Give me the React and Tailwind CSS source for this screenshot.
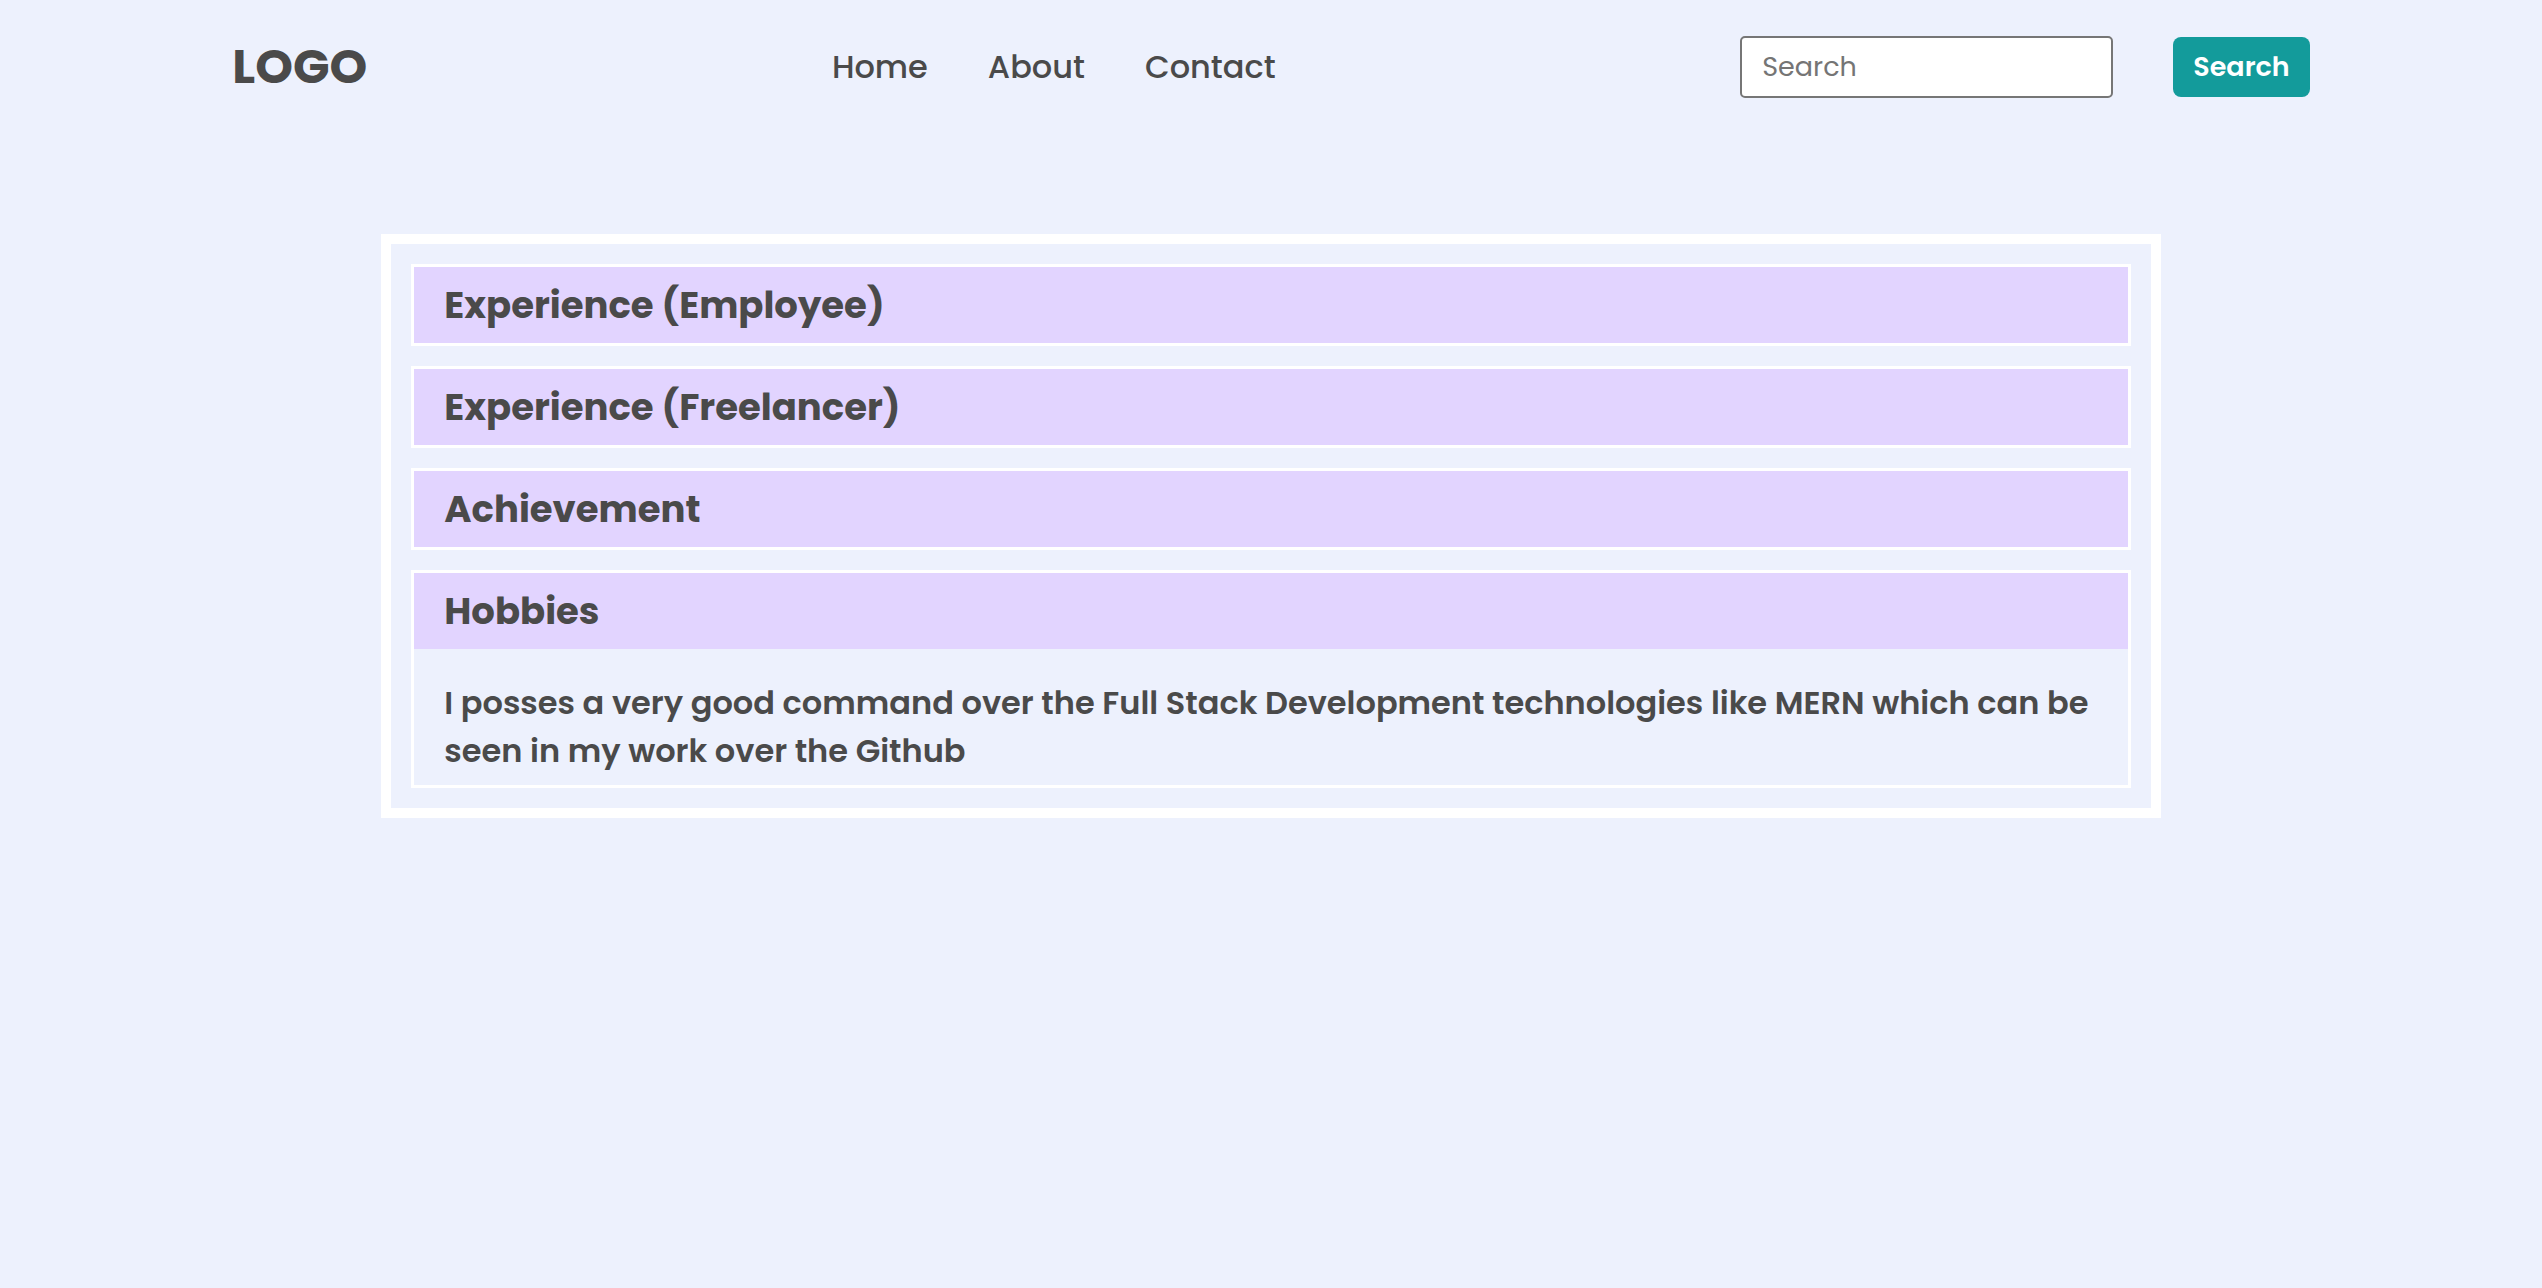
import { useState } from "react";

const links = ["Home", "About", "Contact"];

const sections = [
  {
    title: "Experience (Employee)",
    body: "I have worked as an employee on Full Stack Development projects",
  },
  {
    title: "Experience (Freelancer)",
    body: "I have worked as a freelancer on Full Stack Development projects",
  },
  {
    title: "Achievement",
    body: "My achievements can be seen in my work over the Github",
  },
  {
    title: "Hobbies",
    body: "I posses a very good command over the Full Stack Development technologies like MERN which can be seen in my work over the Github",
  },
];

function Navbar() {
  return (
    <header className="flex items-center justify-around pt-[31px] pb-[30px]">
      <div className="text-[48px] leading-[72px] font-bold">LOGO</div>
      <nav>
        <ul className="flex gap-[60px] text-[32px] leading-[48px] font-medium">
          {links.map((link) => (
            <li key={link}>
              <a href={"#" + link.toLowerCase()}>{link}</a>
            </li>
          ))}
        </ul>
      </nav>
      <form
        className="flex items-center gap-[60px] text-[27px] leading-[40px]"
        onSubmit={(event) => event.preventDefault()}
      >
        <input
          type="search"
          aria-label="Search"
          placeholder="Search"
          className="w-[373px] rounded-[5px] border-2 border-[#767676] bg-white px-[20px] py-[9px] placeholder:text-[#757575]"
        />
        <button
          type="submit"
          className="rounded-[8px] bg-[#139b9b] px-[20px] py-[10px] font-semibold text-white"
        >
          Search
        </button>
      </form>
    </header>
  );
}

function Section({ id, title, body, open, onToggle }) {
  return (
    <section className="border-3 border-white">
      <h2>
        <button
          type="button"
          aria-expanded={open}
          aria-controls={id}
          onClick={onToggle}
          className="block w-full bg-[#e2d4ff] px-[30px] py-[10px] text-left text-[37px] leading-[56px] font-bold"
        >
          {title}
        </button>
      </h2>
      {open && (
        <p
          id={id}
          className="px-[30px] pt-[30px] pb-[10px] text-[32px] leading-[48px] font-semibold"
        >
          {body}
        </p>
      )}
    </section>
  );
}

export default function App() {
  const [active, setActive] = useState(3);
  return (
    <div className="min-h-screen bg-[#edf1fd] font-['Poppins','Inter',sans-serif] text-[#4a4a4a]">
      <Navbar />
      <main className="mx-auto mt-[101px] flex w-[70%] flex-col gap-[20px] border-10 border-white p-[20px]">
        {sections.map((section, index) => (
          <Section
            key={section.title}
            id={"section-" + index}
            title={section.title}
            body={section.body}
            open={active === index}
            onToggle={() => setActive(active === index ? -1 : index)}
          />
        ))}
      </main>
    </div>
  );
}
